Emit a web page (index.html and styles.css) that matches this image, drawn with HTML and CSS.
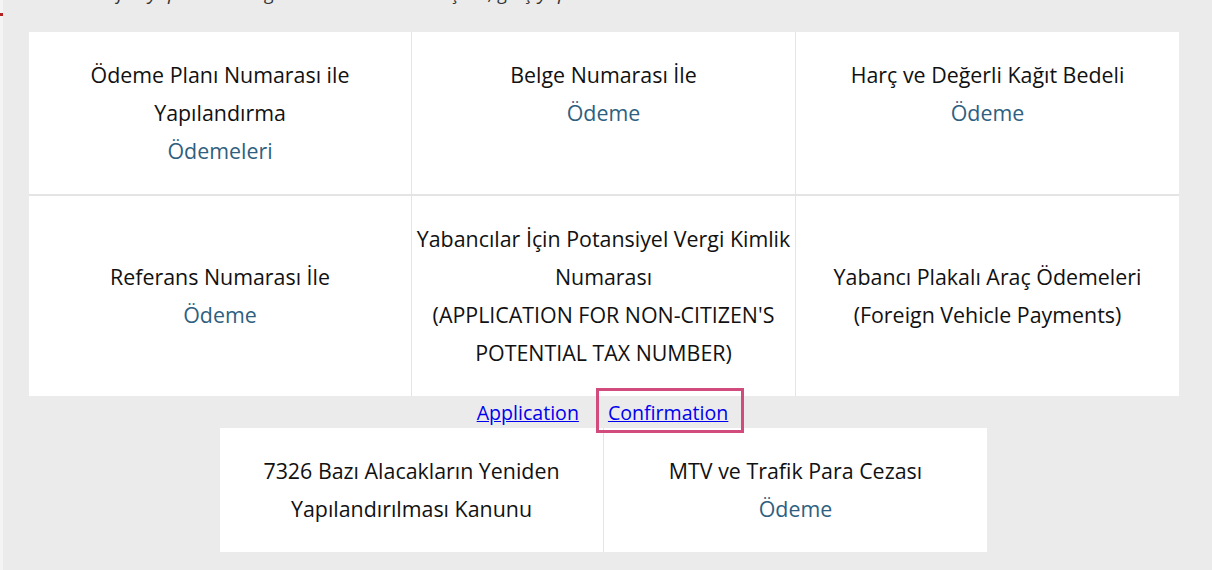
FILE: index.html
```html
<!DOCTYPE html>
<html lang="tr">
<head>
<meta charset="utf-8">
<title>Ödeme</title>
<link rel="stylesheet" href="styles.css">
</head>
<body>
<div class="strip"><span class="mark"></span></div>
<div class="page">
  <p class="intro">Lütfen yapmak istediğiniz ödeme türünü seçiniz, giriş yapınız.</p>
  <div class="grid3">
    <div class="cell top">
      <span class="title">Ödeme Planı Numarası ile<br>Yapılandırma</span>
      <a class="pay" href="#">Ödemeleri</a>
    </div>
    <div class="cell top">
      <span class="title">Belge Numarası İle</span>
      <a class="pay" href="#">Ödeme</a>
    </div>
    <div class="cell top">
      <span class="title">Harç ve Değerli Kağıt Bedeli</span>
      <a class="pay" href="#">Ödeme</a>
    </div>
    <div class="cell mid">
      <span class="title">Referans Numarası İle</span>
      <a class="pay" href="#">Ödeme</a>
    </div>
    <div class="cell mid">
      <span class="title">Yabancılar İçin Potansiyel Vergi Kimlik<br>Numarası<br>(APPLICATION FOR NON-CITIZEN'S<br>POTENTIAL TAX NUMBER)</span>
    </div>
    <div class="cell mid">
      <span class="title">Yabancı Plakalı Araç Ödemeleri<br>(Foreign Vehicle Payments)</span>
    </div>
  </div>
  <div class="links">
    <a class="link" href="#">Application</a>
    <span class="hl"><a class="link" href="#">Confirmation</a></span>
  </div>
  <div class="grid2">
    <div class="cell top">
      <span class="title">7326 Bazı Alacakların Yeniden<br>Yapılandırılması Kanunu</span>
    </div>
    <div class="cell top">
      <span class="title">MTV ve Trafik Para Cezası</span>
      <a class="pay" href="#">Ödeme</a>
    </div>
  </div>
</div>
</body>
</html>
```
FILE: styles.css
```css
html, body {
  margin: 0;
  padding: 0;
}
body {
  background: #ebebeb;
  font-family: "Open Sans", "Liberation Sans", sans-serif;
  color: #111;
  height: 570px;
  overflow: hidden;
  position: relative;
}
.strip {
  position: absolute;
  left: 0;
  top: 0;
  width: 3px;
  height: 570px;
  background: #f4f4f4;
}
.mark {
  position: absolute;
  left: 0;
  top: 13px;
  width: 3px;
  height: 3px;
  background: #b22222;
}
.page {
  padding-left: 29px;
}
.intro {
  margin: -19px 0 0 62px;
  height: 51px;
  font-style: italic;
  font-size: 19px;
  line-height: 24px;
  color: #333;
  white-space: nowrap;
}
.grid3 {
  width: 1150px;
  display: grid;
  grid-template-columns: 382px 383px 383px;
  column-gap: 1px;
  row-gap: 2px;
  background: #e4e4e4;
}
.grid2 {
  margin-left: 191px;
  width: 767px;
  display: grid;
  grid-template-columns: 383px 383px;
  column-gap: 1px;
  background: #e4e4e4;
}
.cell {
  background: #fff;
  padding: 24px 2px;
  display: flex;
  flex-direction: column;
  align-items: center;
  text-align: center;
  font-size: 21.4px;
  line-height: 38px;
  white-space: nowrap;
}
.cell.top {
  justify-content: flex-start;
}
.cell.mid {
  justify-content: center;
}
.title {
  display: block;
}
.pay {
  color: #2f5f80;
  text-decoration: none;
}
.links {
  width: 1150px;
  height: 32px;
  display: flex;
  justify-content: center;
  align-items: center;
  gap: 29px;
  padding-right: 3px;
  box-sizing: border-box;
  font-size: 19.6px;
  position: relative;
}
.link {
  color: #0000ee;
  text-decoration: underline;
}
.hl {
  position: relative;
}
.hl::after {
  content: "";
  position: absolute;
  left: -12px;
  right: -16px;
  top: -11px;
  bottom: -7px;
  border: 3px solid #d14c7c;
}
```
